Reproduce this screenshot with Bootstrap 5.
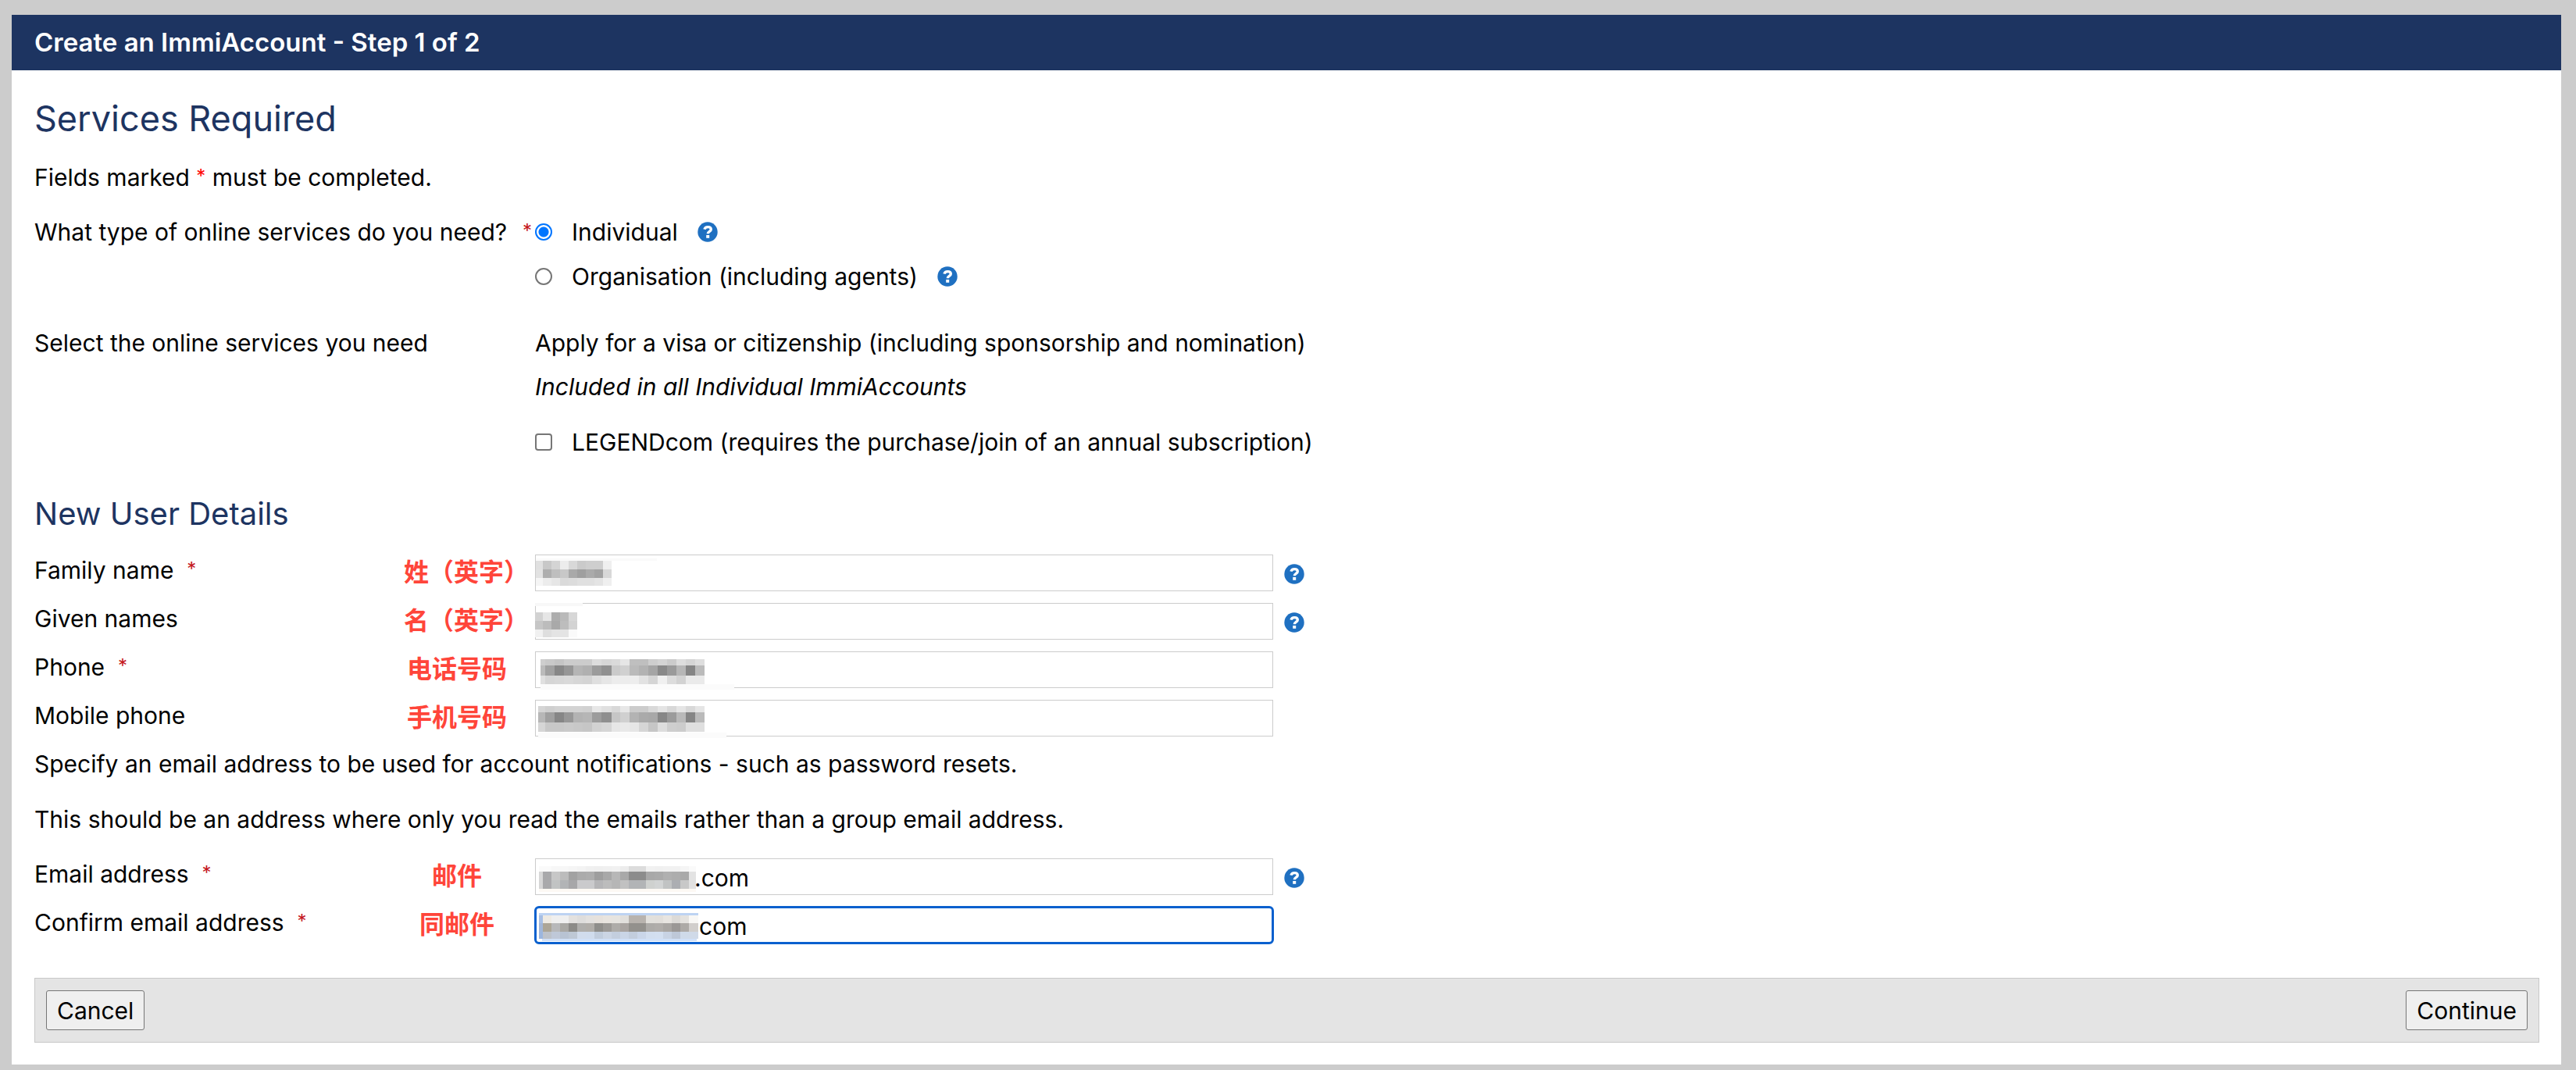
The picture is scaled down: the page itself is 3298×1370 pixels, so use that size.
<!DOCTYPE html>
<html lang="en">
<head>
<meta charset="utf-8">
<meta name="viewport" content="width=device-width, initial-scale=1">
<title>Create an ImmiAccount</title>
<link href="https://cdn.jsdelivr.net/npm/bootstrap@5.3.0/dist/css/bootstrap.min.css" rel="stylesheet">
<style>
body{background:#ccc;color:#000;font-family:Inter,"Noto Sans CJK SC",sans-serif;font-size:30px;line-height:40px;padding:19px 19px 7px 15px}
.panel-head{background:#1d3461;color:#fff;font-size:33px;line-height:40px;font-weight:600;padding:15px 29px 16px}
.panel-main{padding:35px 28px 28px 29px}
h2,h3{color:#1d3461;font-weight:400;margin:0}
h2{font-size:45px;line-height:54px;margin-bottom:28px}
h3{font-size:40px;line-height:48px;margin:48px 0 28px}
.req,.req-bright{color:#c4161c;font-size:24px;line-height:24px;vertical-align:4px}
.req-bright{color:#f00}
.q-label{flex:0 0 641px}
.block-type{margin-top:30px}
.block-services{margin-top:45px}
.note-gap{margin-top:31px}
.email-gap{margin-top:30px}
.opt{gap:25px}
.opt + .opt{margin-top:17px}
.opt .form-check-input{width:22px;height:22px;margin:0;border:2px solid #767676;flex:none}
.opt .form-check-input[type=checkbox]{border-radius:4px}
.opt .form-check-input[type=radio]:checked{border-color:#0075ff;background:radial-gradient(circle,#0075ff 6px,#fff 7px)}
.help{border:0;background:none;padding:0;width:26px;height:26px;display:block;flex:none}
.help svg{display:block}
.f-row{height:62px}
.f-row .help{margin-top:12px}
.f-label{flex:1}
.f-zh{color:#ff453a;font-family:"Noto Sans CJK SC",sans-serif;font-size:32px;font-weight:700;width:200px;text-align:center}
.f-zh.wide{padding-left:24px}
.f-box{position:relative;width:945px;margin-right:14px}
.f-box .form-control{height:47px;border:1px solid #ccc;border-radius:0;font-size:30px;line-height:40px;padding:2px 8px 0;color:#000;box-shadow:none;font-family:inherit}
.f-box .mail{padding-left:203px}
.f-box .mail-confirm{padding-left:209px}
.f-box .active-box{outline:3px solid #0a60ce;outline-offset:-2px;border-radius:5px;border-color:#6b9fe0}
.mosaic{position:absolute;left:0;top:0;pointer-events:none}
.action-bar{background:#e4e4e4;border:1px solid #c8c8c8;padding:15px 14px;margin-top:29px}
.act{background:#efefef;border:1px solid #767676;border-radius:3px;color:#000;font-size:30px;line-height:40px;padding:5px 13px 4px}
</style>
</head>
<body>
<svg class="d-none" aria-hidden="true"><symbol id="q" viewBox="0 0 26 26"><circle cx="13" cy="13" r="12.7" fill="#1f70c1"/><path d="M8.9 9.6C9.5 7.4 11 6.6 13.3 6.6c2.5 0 4 1.2 4 3.1 0 2.8-4 2.6-4 5.6" fill="none" stroke="#fff" stroke-width="3.4"/><path d="M11.2 17h4v3.8h-4z" fill="#fff"/></symbol></svg>
<main class="bg-white">
  <h1 class="panel-head m-0">Create an ImmiAccount - Step 1 of 2</h1>
  <form class="panel-main">
    <h2>Services Required</h2>
    <p class="mb-0">Fields marked <span class="req-bright">*</span> must be completed.</p>
    <div class="block-type d-flex" role="radiogroup" aria-labelledby="svc">
      <div class="q-label d-flex justify-content-between"><span id="svc">What type of online services do you need?</span><span class="pe-1"><span class="req">*</span></span></div>
      <div>
        <div class="opt d-flex align-items-center"><input class="form-check-input" type="radio" name="svc" id="ind" checked><label for="ind">Individual</label><button type="button" class="help" aria-label="Help"><svg width="26" height="26"><use href="#q"/></svg></button></div>
        <div class="opt d-flex align-items-center"><input class="form-check-input" type="radio" name="svc" id="org"><label for="org">Organisation (including agents)</label><button type="button" class="help" aria-label="Help"><svg width="26" height="26"><use href="#q"/></svg></button></div>
      </div>
    </div>
    <div class="block-services d-flex">
      <div class="q-label">Select the online services you need</div>
      <div>
        <div>Apply for a visa or citizenship (including sponsorship and nomination)</div>
        <div class="fst-italic mt-3">Included in all Individual ImmiAccounts</div>
        <div class="opt note-gap d-flex align-items-center"><input class="form-check-input" type="checkbox" id="leg"><label for="leg">LEGENDcom (requires the purchase/join of an annual subscription)</label></div>
      </div>
    </div>
    <h3>New User Details</h3>
    <div class="f-row d-flex">
      <div class="q-label d-flex"><label class="f-label" for="fam">Family name &nbsp;<span class="req">*</span></label><span class="f-zh wide">姓（英字）</span></div>
      <div class="f-box"><input class="form-control" type="text" id="fam"><svg class="mosaic" data-mosaic="family" width="300" height="52"></svg></div>
      <button type="button" class="help" aria-label="Help"><svg width="26" height="26"><use href="#q"/></svg></button>
    </div>
    <div class="f-row d-flex">
      <div class="q-label d-flex"><label class="f-label" for="giv">Given names</label><span class="f-zh wide">名（英字）</span></div>
      <div class="f-box"><input class="form-control" type="text" id="giv"><svg class="mosaic" data-mosaic="given" width="300" height="52"></svg></div>
      <button type="button" class="help" aria-label="Help"><svg width="26" height="26"><use href="#q"/></svg></button>
    </div>
    <div class="f-row d-flex">
      <div class="q-label d-flex"><label class="f-label" for="pho">Phone &nbsp;<span class="req">*</span></label><span class="f-zh">电话号码</span></div>
      <div class="f-box"><input class="form-control" type="tel" id="pho"><svg class="mosaic" data-mosaic="phone" width="300" height="52"></svg></div>
    </div>
    <div class="f-row d-flex">
      <div class="q-label d-flex"><label class="f-label" for="mob">Mobile phone</label><span class="f-zh">手机号码</span></div>
      <div class="f-box"><input class="form-control" type="tel" id="mob"><svg class="mosaic" data-mosaic="mobile" width="300" height="52"></svg></div>
    </div>
    <p class="mb-0">Specify an email address to be used for account notifications - such as password resets.</p>
    <p class="note-gap mb-0">This should be an address where only you read the emails rather than a group email address.</p>
    <div class="f-row d-flex email-gap">
      <div class="q-label d-flex"><label class="f-label" for="ema">Email address &nbsp;<span class="req">*</span></label><span class="f-zh">邮件</span></div>
      <div class="f-box"><input class="form-control mail" type="text" id="ema" value=".com"><svg class="mosaic" data-mosaic="email" width="300" height="52"></svg></div>
      <button type="button" class="help" aria-label="Help"><svg width="26" height="26"><use href="#q"/></svg></button>
    </div>
    <div class="f-row d-flex">
      <div class="q-label d-flex"><label class="f-label" for="con">Confirm email address &nbsp;<span class="req">*</span></label><span class="f-zh">同邮件</span></div>
      <div class="f-box"><input class="form-control mail-confirm active-box" type="text" id="con" value="com"><svg class="mosaic" data-mosaic="confirm" width="300" height="52"></svg></div>
    </div>
    <div class="action-bar d-flex justify-content-between">
      <button type="button" class="act">Cancel</button>
      <button type="submit" class="act">Continue</button>
    </div>
  </form>
</main>
<script src="https://cdn.jsdelivr.net/npm/bootstrap@5.3.0/dist/js/bootstrap.bundle.min.js"></script>
<script>
// Redaction blocks: [y, height, column edges, space-separated fills]
const gridA = [1,10,21,32,43,54,65,76,87,98];
const gridB = [0,10,21,32,43,54];
const gridP = [7,13,25,37,49,61,73,85,98,109,121,133,145,157,169,181,193,205,217];
const gridM = [4].concat(gridP.slice(1));
const gridE = [5,10,21,32,43,54,65,76,87,98,109,120,131,142,153,164,175,186,197,206];
const gridC = gridE.slice(0, -1).concat(209);
const mosaics = {
  family: [
    [5,3,[1,156],'#fafafa'],
    [8,11,gridA,'#e0e0e0 #c8c8c8 #d4d4d4 #ececec #d8d8d8 #cacaca #cecece #cecece #efefef'],
    [19,11,gridA,'#e2e2e2 #aeaeae #bebebe #c8c8c8 #a9a9a9 #9f9f9f #aaaaaa #a2a2a2 #d8d8d8'],
    [30,10,gridA,'#f5f5f5 #ececec #e6e6e6 #dadada #dcdcdc #e0e0e0 #e0e0e0 #e4e4e4 #efefef']],
  given: [
    [0,4,[0,61],'#f8f8f8'],
    [12,11,gridB,'#d2d2d2 #e6e6e6 #adadad #bababa #d7d7d7'],
    [23,11,gridB,'#c6c6c6 #bcbcbc #a9a9a9 #bdbdbd #d3d3d3'],
    [34,10,gridB,'#f1f1f1 #dedede #e4e4e4 #e4e4e4 #fafafa']],
  phone: [
    [10,8,gridP,'#cecece #c9c9c9 #c4c4c4 #cccccc #cccccc #cccccc #dcdcdc #d6d6d6 #dadada #e6e6e6 #bfbfbf #bfbfbf #cecece #d4d4d4 #cbcbcb #dddddd #d5d5d5 #dedede'],
    [18,13,gridP,'#bbbbbb #a1a1a1 #878787 #969696 #b5b5b5 #b0b0b0 #9b9b9b #909090 #cacaca #d0d0d0 #bababa #b2b2b2 #a5a5a5 #898989 #9a9a9a #b6b6b6 #858585 #bbbbbb'],
    [31,11,gridP,'#e0e0e0 #d5d5d5 #d7d7d7 #d9d9d9 #d6d6d6 #d4d4d4 #dfdfdf #e6e6e6 #ececec #ececec #ededed #e2e2e2 #d5d5d5 #f0f0f0 #dcdcdc #d2d2d2 #eaeaea #eaeaea'],
    [42,7,[7,255],'#fbfbfb']],
  mobile: [
    [8,8,gridM,'#d5d5d5 #cfcfcf #d3d3d3 #d3d3d3 #d3d3d3 #d1d1d1 #e7e7e7 #e0e0e0 #d8d8d8 #e7e7e7 #cccccc #cccccc #d9d9d9 #e4e4e4 #d8d8d8 #e5e5e5 #d8d8d8 #e5e5e5'],
    [16,13,gridM,'#b7b7b7 #a0a0a0 #868686 #979797 #b3b3b3 #b6b6b6 #9c9c9c #8f8f8f #c6c6c6 #d0d0d0 #b3b3b3 #aaaaaa #a8a8a8 #878787 #9b9b9b #b9b9b9 #858585 #bababa'],
    [29,12,gridM,'#d6d6d6 #c8c8c8 #c8c8c8 #cacaca #c8c8c8 #c6c6c6 #d2d2d2 #d6d6d6 #e6e6e6 #e9e9e9 #e6e6e6 #d6d6d6 #c6c6c6 #dddddd #cecece #cccccc #dfdfdf #dfdfdf'],
    [42,7,[4,245],'#fbfbfb']],
  email: [
    [10,7,gridE,'#fafafa #fafafa #f7f7f7 #f7f7f7 #f5f5f5 #f3f3f3 #f0f0f0 #efefef #f0f0f0 #f1f1f1 #ececec #dcdcdc #dcdcdc #f1f1f1 #f0f0f0 #f1f1f1 #f1f1f1 #f5f5f5 #fafafa'],
    [17,11,gridE,'#d8d8d8 #a9a9ab #c7c7c7 #bcbcbc #a2a2a2 #ababab #adadad #9e9e9e #a8a8a8 #b7b7b7 #a8a8a8 #8c8c8c #8c8c8c #a8a8a8 #aaaaaa #b0b0b0 #adadad #a9a9a9 #e3e3e3'],
    [28,11,gridE,'#d6d6d6 #a9a9ab #c1c3c3 #b2b4b6 #a7a7a9 #cacacc #cacacc #b5b5b7 #bcbcbc #b6b6b6 #c1c1c1 #b2b4b6 #b2b4b6 #cfd1cf #d2d4d4 #c1c3c3 #acaeb2 #c8c8c8 #e1e1e1'],
    [39,4,[5,206],'#fdf9f4']],
  confirm: [
    [8,3,[5,209],'#bdd3f3'],
    [11,10,gridC,'#a7bfe4 #eeeae3 #efefef #efefef #e3e1df #dedddc #e3e1df #e6e1dc #e8e4df #e6e4e0 #e1dfdc #b8b3ae #b8b3ae #e2e0dc #e2dfdb #e8e5e1 #dcdad7 #e4e2df #f8f7f5'],
    [21,11,gridC,'#a1b6d8 #aca596 #b7b8ba #a9a8a4 #8c8b88 #afaeac #b0ada9 #8f8e8b #9c9a97 #aeaca9 #a9a4a1 #93918d #93918d #adaba8 #b0adaa #a9a6a3 #9b9896 #adaaa7 #d1cecc'],
    [32,9,gridC,'#9cb6df #bdc2ca #bfc8d8 #b8c3d3 #bec8d5 #d1dcec #d0dced #c1cddd #cbd5e4 #c3cede #cad5e6 #c2cddd #cad6e9 #d2deef #d3dff0 #c8d3e4 #bec8d8 #cfdae9 #d0dae8'],
    [41,3,[9,207],'#d1e1f8']]
};
document.querySelectorAll('[data-mosaic]').forEach(svg => {
  mosaics[svg.dataset.mosaic].forEach(([y, h, edges, fills]) => {
    fills.split(' ').forEach((fill, i) => {
      const r = document.createElementNS('http://www.w3.org/2000/svg', 'rect');
      const a = {x: edges[i], y, width: edges[i + 1] - edges[i], height: h, fill, 'shape-rendering': 'crispEdges'};
      for (const k in a) r.setAttribute(k, a[k]);
      svg.append(r);
    });
  });
});
</script>
</body>
</html>
